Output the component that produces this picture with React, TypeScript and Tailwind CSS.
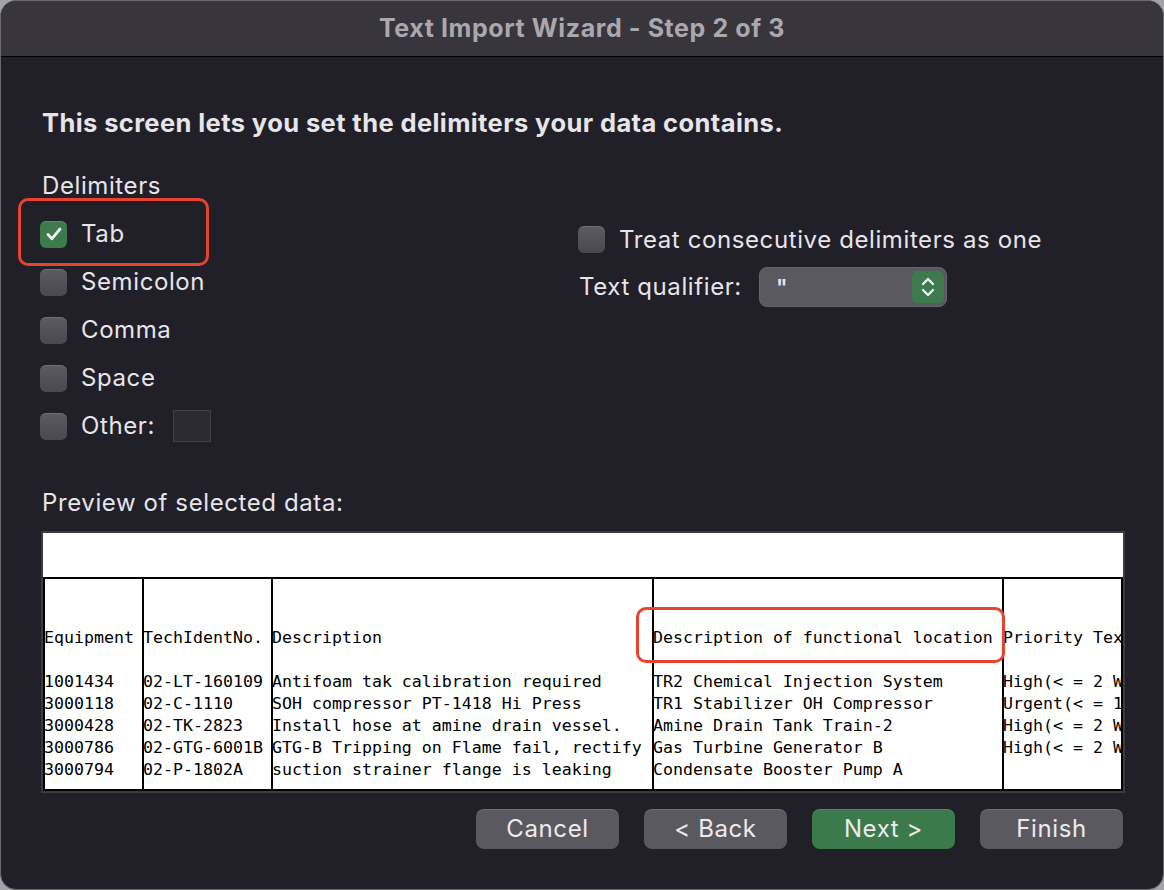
import { useState } from "react";

const rows = [
  ["1001434", "02-LT-160109", "Antifoam tak calibration required", "TR2 Chemical Injection System", "High(< = 2 Weeks)"],
  ["3000118", "02-C-1110", "SOH compressor PT-1418 Hi Press", "TR1 Stabilizer OH Compressor", "Urgent(< = 1 Week)"],
  ["3000428", "02-TK-2823", "Install hose at amine drain vessel.", "Amine Drain Tank Train-2", "High(< = 2 Weeks)"],
  ["3000786", "02-GTG-6001B", "GTG-B Tripping on Flame fail, rectify", "Gas Turbine Generator B", "High(< = 2 Weeks)"],
  ["3000794", "02-P-1802A", "suction strainer flange is leaking", "Condensate Booster Pump A", ""],
];

const headers = ["Equipment", "TechIdentNo.", "Description", "Description of functional location", "Priority Text"];
const colWidths = ["w-[99px]", "w-[129px]", "w-[381px]", "w-[350px]", "flex-1"];

const Checkbox = ({ checked, onClick }: { checked: boolean; onClick: () => void }) => (
  <button
    onClick={onClick}
    className={
      checked
        ? "flex h-[27px] w-[27px] shrink-0 items-center justify-center rounded-[6px] bg-[#3d7b4c] shadow-[inset_0_1px_0_rgba(255,255,255,0.15)]"
        : "h-[27px] w-[27px] shrink-0 rounded-[6px] bg-gradient-to-b from-[#5d5b62] to-[#4a4850] shadow-[inset_0_1px_0_rgba(255,255,255,0.12)]"
    }
  >
    {checked && (
      <svg width="20" height="20" viewBox="0 0 20 20" fill="none">
        <path d="M4 10.5l4 4.2L16 5" stroke="#f4f4f4" strokeWidth="2.8" strokeLinecap="round" strokeLinejoin="round" />
      </svg>
    )}
  </button>
);

const Button = ({ label, primary }: { label: string; primary?: boolean }) => (
  <button
    className={
      (primary ? "bg-[#3b7a4a] " : "bg-[#5b5960] ") +
      "h-[40px] w-[143px] rounded-[8px] text-[24px] tracking-[0.6px] text-[#ebeaee] shadow-[inset_0_1px_0_rgba(255,255,255,0.12)]"
    }
  >
    {label}
  </button>
);

export default function App() {
  const [delims, setDelims] = useState<Record<string, boolean>>({
    Tab: true,
    Semicolon: false,
    Comma: false,
    Space: false,
    "Other:": false,
  });
  const [consecutive, setConsecutive] = useState(false);

  return (
    <div className="h-[890px] w-[1164px] bg-[#a4a3a8] font-[Inter,sans-serif]">
      <div className="relative flex h-[890px] w-[1164px] flex-col overflow-hidden rounded-[16px] border border-[#6a696e] bg-[#211f28]">
        <div className="flex h-[56px] shrink-0 items-center justify-center border-b border-black bg-[#38363c]">
          <span className="text-[25px] font-bold tracking-[0.6px] text-[#aaa8ae]">Text Import Wizard - Step 2 of 3</span>
        </div>

        <div className="flex flex-col px-[39px] text-[#e6e5ea]">
          <h1 className="mt-[52px] pl-[2px] text-[25.5px] leading-[28px] font-bold tracking-[0.4px]">
            This screen lets you set the delimiters your data contains.
          </h1>

          <div className="mt-[35px] pl-[2px] text-[24px] leading-[28px] tracking-[0.6px]">Delimiters</div>

          <div className="mt-[10px] flex text-[24px] tracking-[0.6px]">
            <div className="flex w-[538px] flex-col">
              {Object.keys(delims).map((name) => (
                <div key={name} className="flex h-[48px] items-center">
                  <Checkbox checked={delims[name]} onClick={() => setDelims({ ...delims, [name]: !delims[name] })} />
                  <span className="ml-[14px]">{name}</span>
                  {name === "Other:" && (
                    <div className="ml-[18px] h-[32px] w-[38px] border border-[#403e46] bg-[#2c2a33]" />
                  )}
                </div>
              ))}
            </div>

            <div className="flex flex-col pt-[16px]">
              <div className="flex h-[27px] items-center">
                <Checkbox checked={consecutive} onClick={() => setConsecutive(!consecutive)} />
                <span className="ml-[14px]">Treat consecutive delimiters as one</span>
              </div>
              <div className="mt-[14px] flex h-[40px] items-center">
                <span className="pl-[1px]">Text qualifier:</span>
                <div className="ml-[17px] flex h-[40px] w-[188px] shrink-0 items-center justify-between rounded-[8px] border border-[#66646b] bg-[#5a5860] pr-[2px] pl-[16px]">
                  <span className="text-[22px] font-semibold leading-none">"</span>
                  <div className="flex h-[32px] w-[32px] shrink-0 items-center justify-center rounded-[6px] bg-[#3d7b4c]">
                    <svg width="18" height="26" viewBox="0 0 18 26" fill="none">
                      <path d="M4 10l5-5 5 5M4 16l5 5 5-5" stroke="#f2f2f2" strokeWidth="2.3" strokeLinecap="round" strokeLinejoin="round" />
                    </svg>
                  </div>
                </div>
              </div>
            </div>
          </div>

          <div className="mt-[39px] pl-[2px] text-[24px] leading-[28px] tracking-[0.6px]">Preview of selected data:</div>

          <div className="mt-[14px] ml-[1px] h-[262px] w-[1084px] border-2 border-[#3c3b41] bg-white">
            <div className="h-[44px]" />
            <div className="flex h-[214px] overflow-hidden border-2 border-black font-['DejaVu_Sans_Mono',monospace] text-[16.6px] leading-[22px] text-black">
              {headers.map((h, i) => (
                <div
                  key={h}
                  className={colWidths[i] + " shrink-0 overflow-hidden whitespace-pre pt-[48px] " + (i < 4 ? "border-r-2 border-black" : "")}
                >
                  <div className="ml-[-1px]">{h}</div>
                  <div>&nbsp;</div>
                  {rows.map((r) => (
                    <div key={r[0]} className="ml-[-1px]">{r[i] || "\u00a0"}</div>
                  ))}
                </div>
              ))}
            </div>
          </div>

          <div className="mt-[16px] flex justify-end gap-[25px] pr-[1px]">
            <Button label="Cancel" />
            <Button label="< Back" />
            <Button label="Next >" primary />
            <Button label="Finish" />
          </div>
        </div>

        <div className="pointer-events-none absolute top-[197px] left-[17px] h-[68px] w-[191px] rounded-[10px] border-[3px] border-[#e8432d]" />
        <div className="pointer-events-none absolute top-[606px] left-[635px] h-[56px] w-[369px] rounded-[10px] border-[3px] border-[#e8432d]" />
      </div>
    </div>
  );
}
